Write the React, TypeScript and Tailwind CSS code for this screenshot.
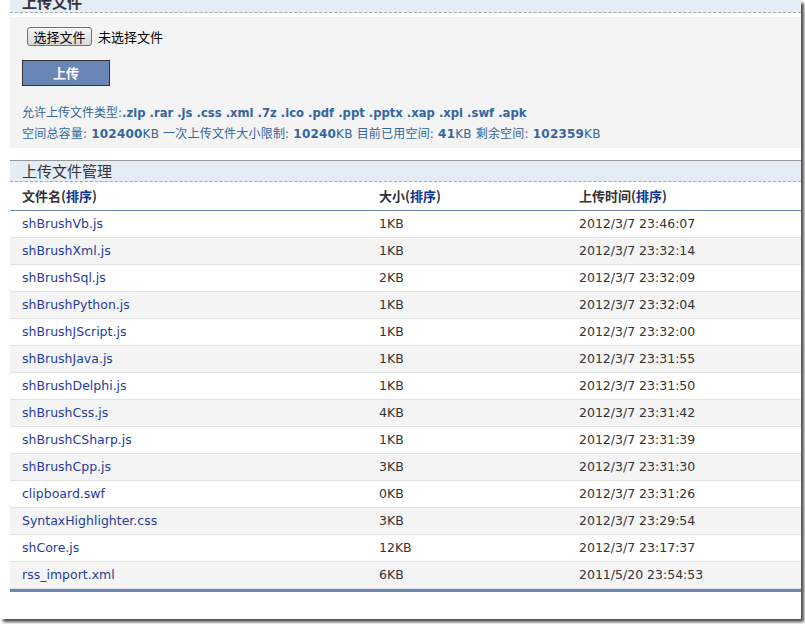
import React from "react";

interface FileRow {
  name: string;
  size: string;
  time: string;
}

const files: FileRow[] = [
  { name: "shBrushVb.js", size: "1KB", time: "2012/3/7 23:46:07" },
  { name: "shBrushXml.js", size: "1KB", time: "2012/3/7 23:32:14" },
  { name: "shBrushSql.js", size: "2KB", time: "2012/3/7 23:32:09" },
  { name: "shBrushPython.js", size: "1KB", time: "2012/3/7 23:32:04" },
  { name: "shBrushJScript.js", size: "1KB", time: "2012/3/7 23:32:00" },
  { name: "shBrushJava.js", size: "1KB", time: "2012/3/7 23:31:55" },
  { name: "shBrushDelphi.js", size: "1KB", time: "2012/3/7 23:31:50" },
  { name: "shBrushCss.js", size: "4KB", time: "2012/3/7 23:31:42" },
  { name: "shBrushCSharp.js", size: "1KB", time: "2012/3/7 23:31:39" },
  { name: "shBrushCpp.js", size: "3KB", time: "2012/3/7 23:31:30" },
  { name: "clipboard.swf", size: "0KB", time: "2012/3/7 23:31:26" },
  { name: "SyntaxHighlighter.css", size: "3KB", time: "2012/3/7 23:29:54" },
  { name: "shCore.js", size: "12KB", time: "2012/3/7 23:17:37" },
  { name: "rss_import.xml", size: "6KB", time: "2011/5/20 23:54:53" },
];

const Sort: React.FC = () => (
  <span>
    (<a className="text-[#0d3092] cursor-pointer">排序</a>)
  </span>
);

const App: React.FC = () => {
  return (
    <div className="w-[805px] h-[624px] bg-white overflow-hidden font-['DejaVu_Sans','Noto_Sans_CJK_SC',sans-serif]">
      <div className="w-[801px] h-[619px] bg-white overflow-hidden pl-[10px] shadow-[3px_3px_3px_rgba(0,0,0,0.7)]">
        {/* 上传文件 */}
        <div className="-mt-[8px] h-[21px] bg-[#e4ecf6] border-b border-dashed border-[#aaaaaa] pl-3 flex items-center text-[15px] font-bold text-[#333] font-['Noto_Sans_CJK_SC',sans-serif]">
          上传文件
        </div>
        <div className="mt-[4px] bg-[#f4f4f4] pl-3 pt-[10px] pb-[3px]">
          <div className="flex items-center h-[19px] pl-[5px] text-[13px] text-black font-['Noto_Sans_CJK_SC',sans-serif]">
            <button className="w-[65px] h-[19px] border border-[#707070] rounded-[3px] bg-gradient-to-b from-[#f6f6f6] to-[#d8d8d8] flex items-center justify-center leading-none">
              选择文件
            </button>
            <span className="ml-[6px]">未选择文件</span>
          </div>
          <button className="mt-[14px] w-[88px] h-[26px] bg-[#6a86b6] border border-[#333] text-white font-bold text-[13px] flex items-center justify-center font-['Noto_Sans_CJK_SC',sans-serif]">
            上传
          </button>
          <div className="mt-[17px] text-[12px] leading-[21px] text-[#33669e]">
            <p>
              允许上传文件类型:
              <b className="text-[11.6px]">.zip .rar .js .css .xml .7z .ico .pdf .ppt .pptx .xap .xpi .swf .apk</b>
            </p>
            <p className="tracking-[0.2px]">
              空间总容量: <b>102400</b>KB 一次上传文件大小限制: <b>10240</b>KB 目前已用空间: <b>41</b>KB 剩余空间: <b>102359</b>KB
            </p>
          </div>
        </div>

        {/* 上传文件管理 */}
        <div className="mt-[12px] border-t border-[#999999]">
          <div className="h-[21px] bg-[#e4ecf6] border-b border-dashed border-[#aaaaaa] pl-3 pt-[1px] flex items-center text-[15px] text-[#333] font-['Noto_Sans_CJK_SC',sans-serif]">
            上传文件管理
          </div>
          <div className="grid grid-cols-[357px_200px_1fr] pl-3 h-[29px] items-center border-b border-[#6a86b4] text-[13px] font-bold text-[#333] font-['Noto_Sans_CJK_SC',sans-serif]">
            <div>
              文件名<Sort />
            </div>
            <div>
              大小<Sort />
            </div>
            <div>
              上传时间<Sort />
            </div>
          </div>
          {files.map((f, i) => (
            <div
              key={f.name}
              className={`grid grid-cols-[357px_200px_1fr] pl-3 h-[27px] items-center border-b border-[#e2e2e2] text-[12.5px] ${
                i % 2 === 1 ? "bg-[#f4f4f4]" : "bg-white"
              }`}
            >
              <a className="text-[#1e3d9c] cursor-pointer">{f.name}</a>
              <span className="text-[#333]">{f.size}</span>
              <span className="text-[#333]">{f.time}</span>
            </div>
          ))}
          <div className="h-[3px] bg-[#6a86b4]" />
        </div>
      </div>
    </div>
  );
};

export default App;
